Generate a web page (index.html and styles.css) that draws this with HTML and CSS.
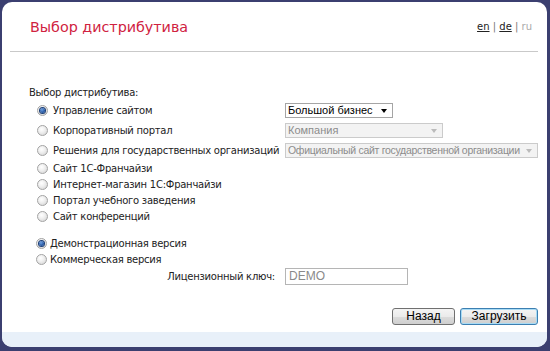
FILE: index.html
```html
<!DOCTYPE html>
<html lang="ru">
<head>
    <meta charset="utf-8">
    <title>Выбор дистрибутива</title>
    <link rel="stylesheet" href="styles.css">
</head>
<body>
    <div class="window">
        <div class="header">
            <h1 class="title">Выбор дистрибутива</h1>
            <div class="langs">
                <a href="#" class="lang">en</a> <span class="sep">|</span>
                <a href="#" class="lang">de</a> <span class="sep">|</span>
                <span class="lang lang--current">ru</span>
            </div>
        </div>
        <div class="rule"></div>

        <div class="content">
            <div class="heading">Выбор дистрибутива:</div>

            <div class="options">
                <div class="option option--tall">
                    <span class="radio radio--checked"></span>
                    <span class="label">Управление сайтом</span>
                    <span class="select select--small">Большой бизнес<i class="arrow"></i></span>
                </div>
                <div class="option option--tall">
                    <span class="radio"></span>
                    <span class="label">Корпоративный портал</span>
                    <span class="select select--medium select--disabled">Компания<i class="arrow"></i></span>
                </div>
                <div class="option option--tall">
                    <span class="radio"></span>
                    <span class="label">Решения для государственных организаций</span>
                    <span class="select select--wide select--disabled">Официальный сайт государственной организации<i class="arrow"></i></span>
                </div>
                <div class="option">
                    <span class="radio"></span>
                    <span class="label">Сайт 1С-Франчайзи</span>
                </div>
                <div class="option">
                    <span class="radio"></span>
                    <span class="label">Интернет-магазин 1С:Франчайзи</span>
                </div>
                <div class="option">
                    <span class="radio"></span>
                    <span class="label">Портал учебного заведения</span>
                </div>
                <div class="option">
                    <span class="radio"></span>
                    <span class="label">Сайт конференций</span>
                </div>
            </div>

            <div class="versions">
                <div class="version">
                    <span class="radio radio--checked"></span>
                    <span class="label">Демонстрационная версия</span>
                </div>
                <div class="version">
                    <span class="radio"></span>
                    <span class="label">Коммерческая версия</span>
                </div>
            </div>

            <div class="license">
                <span class="license-label">Лицензионный ключ:</span>
                <span class="input">DEMO</span>
            </div>

            <div class="buttons">
                <button class="btn btn--back">Назад</button>
                <button class="btn btn--next">Загрузить</button>
            </div>
        </div>

        <div class="statusbar"></div>
    </div>
</body>
</html>
```

FILE: styles.css
```css
:root {
    --ff: 'DejaVu Sans', Verdana, sans-serif;
    --ff-ctrl: 'Liberation Sans', Arial, sans-serif;
    --navy: #3b3f70;
    --red: #d0223f;
}

html, body {
    margin: 0;
    height: 100%;
}

body {
    background: var(--navy);
    font-family: var(--ff);
    font-size: 10px;
    letter-spacing: -0.25px;
    color: #222;
    padding: 2px 3px 4px 2px;
    box-sizing: border-box;
}

.window {
    background: #fff;
    border-radius: 10px;
    height: 345px;
    display: flex;
    flex-direction: column;
    overflow: hidden;
}

.header {
    height: 49px;
    padding: 0 15px 0 28px;

    display: flex;
    align-items: center;
    justify-content: space-between;
}
.header .title {
    margin: 0;
    font-weight: normal;
    font-size: 14.3px;
    letter-spacing: 0;
    color: var(--red);
}
.langs {
    font-size: 10px;
    letter-spacing: 0;
    color: #777;
}
.lang {
    color: #222;
}
.lang--current {
    color: #aaa;
}

.rule {
    height: 1px;
    background: #c9c9c9;
    margin: 0 9px 0 8px;
}

.content {
    display: flex;
    flex-direction: column;
}

.heading {
    margin: 33px 0 0 27px;
    line-height: 15px;
}

.options {
    padding-left: 35px;
}
.option,
.version {
    height: 16px;
    white-space: nowrap;

    display: flex;
    align-items: center;
}
.option--tall {
    height: 20px;
}
.option .label {
    width: 232px;
}

.radio {
    width: 11px;
    height: 11px;
    box-sizing: border-box;
    border: 1px solid #a3a3a3;
    border-radius: 50%;
    background: radial-gradient(circle at 40% 35%, #fff 0, #f0f0f0 40%, #cfcfcf 100%);
    margin-right: 5px;
    flex: none;

    display: inline-flex;
    justify-content: center;
    align-items: center;
}
.radio--checked::after {
    content: '';
    width: 5px;
    height: 5px;
    border-radius: 50%;
    background: radial-gradient(circle at 40% 35%, #6fa0e0 0, #1d4f9c 70%);
    box-shadow: 0 0 0 1px #1b3d74;
}

.select {
    position: relative;
    height: 15px;
    box-sizing: border-box;
    border: 1px solid #a5a5a5;
    padding-left: 2px;
    font-family: var(--ff-ctrl);
    font-size: 11px;
    letter-spacing: 0;
    line-height: 13px;
    color: #000;
    background: #fff;
    white-space: nowrap;
    overflow: hidden;
}
.select--small {
    width: 108px;
}
.select--medium {
    width: 158px;
}
.select--wide {
    width: 253px;
    font-size: 10.5px;
    letter-spacing: -0.3px;
}
.select--disabled {
    background: #f3f3f3;
    border-color: #cbcbcb;
    color: #8c8c8c;
}
.arrow {
    position: absolute;
    right: 5px;
    top: 5px;
    border-left: 3px solid transparent;
    border-right: 3px solid transparent;
    border-top: 4px solid #000;
}
.select--disabled .arrow {
    border-top-color: #bbb;
}

.versions {
    margin-top: 11px;
    padding-left: 34px;
}
.version .radio {
    margin-right: 3px;
}

.license {
    margin-top: 1px;

    display: flex;
    align-items: center;
}
.license-label {
    width: 273px;
    margin-right: 10px;
    text-align: right;
}
.input {
    width: 123px;
    height: 17px;
    box-sizing: border-box;
    border: 1px solid #b5b5b5;
    padding-left: 3px;
    font-family: var(--ff-ctrl);
    font-size: 12px;
    letter-spacing: 0;
    line-height: 15px;
    color: #8a8a8a;
}

.buttons {
    margin-top: 23px;
    padding-right: 9px;

    display: flex;
    justify-content: flex-end;
    gap: 5px;
}
.btn {
    height: 17px;
    padding: 0;
    border: 1px solid #707070;
    border-radius: 3px;
    background: linear-gradient(#f4f4f4 0, #ebebeb 50%, #dcdcdc 51%, #cfcfcf 100%);
    font-family: var(--ff-ctrl);
    font-size: 12px;
    line-height: 15px;
    color: #000;
}
.btn--back {
    width: 63px;
}
.btn--next {
    width: 78px;
    border-color: #3c7fb1;
    box-shadow: inset 0 0 0 1px #a8dbf5;
}

.statusbar {
    margin-top: auto;
    height: 15px;
    background: #e8f0f9;
}
```
